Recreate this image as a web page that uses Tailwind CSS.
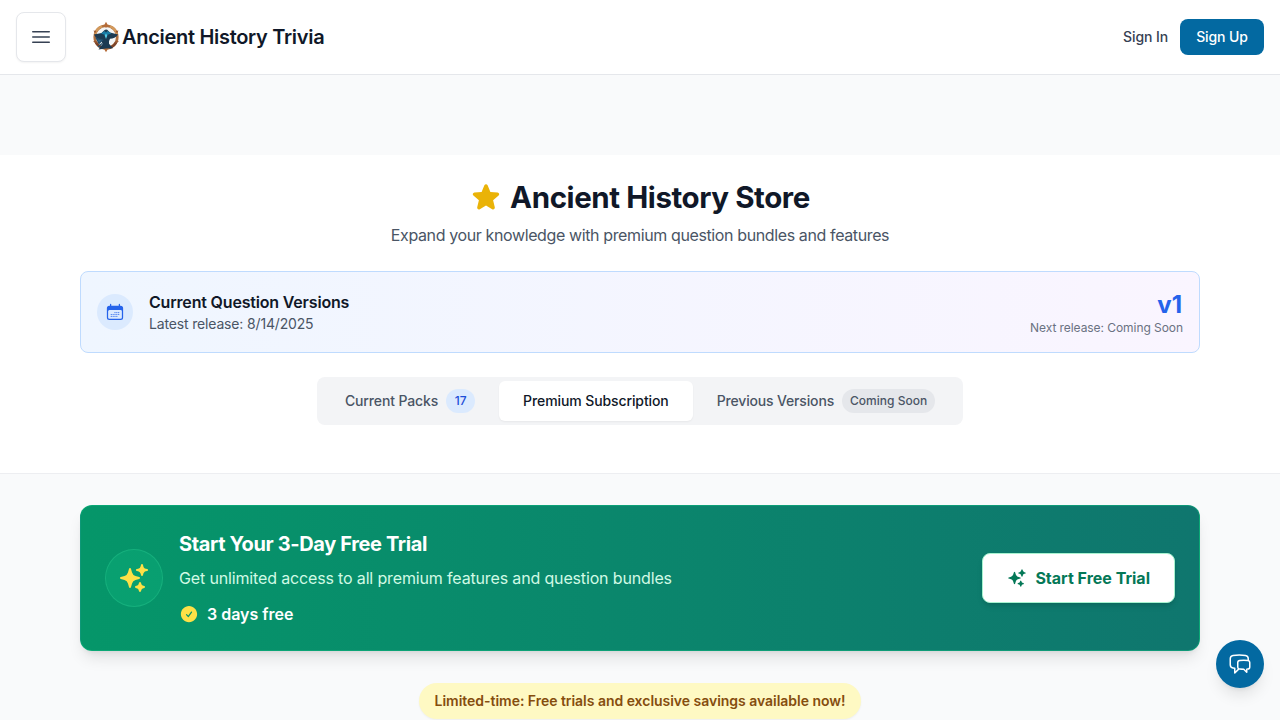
<!DOCTYPE html>
<html lang="en">
<head>
<meta charset="utf-8">
<title>Ancient History Trivia - Store</title>
<script src="https://cdn.jsdelivr.net/npm/@tailwindcss/browser@4"></script>
</head>
<body class="h-screen overflow-hidden bg-gray-50 font-['Inter',sans-serif] text-gray-900">
<svg class="hidden">
  <symbol id="sparkles" viewBox="0 0 24 24"><path fill="currentColor" fill-rule="evenodd" d="M9 4.5a.75.75 0 0 1 .721.544l.813 2.846a3.75 3.75 0 0 0 2.576 2.576l2.846.813a.75.75 0 0 1 0 1.442l-2.846.813a3.75 3.75 0 0 0-2.576 2.576l-.813 2.846a.75.75 0 0 1-1.442 0l-.813-2.846a3.75 3.75 0 0 0-2.576-2.576l-2.846-.813a.75.75 0 0 1 0-1.442l2.846-.813A3.75 3.75 0 0 0 7.466 7.89l.813-2.846A.75.75 0 0 1 9 4.5ZM18 1.5a.75.75 0 0 1 .728.568l.258 1.036c.236.94.97 1.674 1.91 1.91l1.036.258a.75.75 0 0 1 0 1.456l-1.036.258c-.94.236-1.674.97-1.91 1.91l-.258 1.036a.75.75 0 0 1-1.456 0l-.258-1.036a2.625 2.625 0 0 0-1.91-1.91l-1.036-.258a.75.75 0 0 1 0-1.456l1.036-.258a2.625 2.625 0 0 0 1.91-1.91l.258-1.036A.75.75 0 0 1 18 1.5ZM16.5 15a.75.75 0 0 1 .712.513l.394 1.183c.15.447.5.799.948.948l1.183.395a.75.75 0 0 1 0 1.422l-1.183.395c-.447.15-.799.5-.948.948l-.395 1.183a.75.75 0 0 1-1.422 0l-.395-1.183a1.5 1.5 0 0 0-.948-.948l-1.183-.395a.75.75 0 0 1 0-1.422l1.183-.395c.447-.15.799-.5.948-.948l.395-1.183A.75.75 0 0 1 16.5 15Z"/></symbol>
</svg>

<header class="flex h-[75px] items-center border-b border-gray-200 bg-white px-4">
  <button class="flex size-[50px] items-center justify-center rounded-lg border border-gray-200 bg-white text-gray-700 shadow-xs">
    <svg class="size-6" viewBox="0 0 24 24" fill="none" stroke="currentColor" stroke-width="1.5" stroke-linecap="round"><path d="M3.75 6.75h16.5M3.75 12h16.5m-16.5 5.25h16.5"/></svg>
  </button>
  <div class="ml-6 flex items-center">
    <svg class="h-8 w-8" viewBox="0 0 32 32">
      <circle cx="16" cy="16" r="11.3" fill="#f3f5f6" stroke="#b0703f" stroke-width="2.600"/>
      <path d="M5 13a11.500 11.500 0 0 1 7-7.600M20 5.400a11.500 11.500 0 0 1 7 7.600" fill="none" stroke="#d39a5c" stroke-width="2.200"/>
      <path d="M5.600 21a11.500 11.500 0 0 0 7 5.800M26.400 21a11.500 11.500 0 0 1-7 5.800" fill="none" stroke="#7a4229" stroke-width="2.400"/>
      <path d="M16 .8l2 3.600-2 2.600-2-2.600zM16 31.200l2.200-3.800L16 24.500l-2.200 2.900z" fill="#b56a36"/>
      <path d="M3.500 9.500l3 .5-1.500 2.500zM28.500 9.500l-3 .5 1.500 2.500zM3 20.500l3-1 1 3zM29 20.500l-3-1-1 3z" fill="#9a5a34"/>
      <path d="M16 8.500c2 0 2.500 2 4 3l8 2c-1.800 3-5 4-8 4.200l-1 2.500v2.500l4 4.500-7 .3-7.500 1 4-5.500-1-3C8 19.500 6 17 4 13.500l7.500-1.500c1.500-1 2.500-3.500 4.500-3.500z" fill="#1c3a52"/>
      <path d="M11 12.500l3.500-2.500 1.500 1.500 1.500-1.500 4 2.500-4 1.200-1.500 2-1.500-2z" fill="#1a7ca6"/>
      <path d="M16 12.500l1.300 2-1.300 3.500-1.300-3.500z" fill="#52cbe6"/>
      <path d="M6.500 17.500l6 1.500-3.500 3.500zM12 22.500l-4 3.500" fill="#2c6a90" stroke="#234d6b" stroke-width="1.300"/>
    </svg>
    <span class="text-xl leading-7 font-semibold tracking-[-0.3px]">Ancient History Trivia</span>
  </div>
  <nav class="ml-auto flex items-center gap-3 text-sm">
    <a class="font-medium tracking-[-0.1px] text-gray-700">Sign In</a>
    <a class="w-[84px] rounded-lg bg-[#0369a1] py-2 text-center font-medium tracking-[-0.1px] text-white">Sign Up</a>
  </nav>
</header>

<section class="mt-20 border-b border-gray-200/70 bg-white px-20 pt-6 pb-12">
  <h1 class="flex items-center justify-center gap-2 text-[29.500px] leading-9 font-bold tracking-[-0.42px]">
    <svg class="size-8 text-[#eab308]" viewBox="0 0 24 24" fill="currentColor"><path fill-rule="evenodd" d="M10.788 3.21c.448-1.077 1.976-1.077 2.424 0l2.082 5.006 5.404.434c1.164.093 1.636 1.545.749 2.305l-4.117 3.527 1.257 5.273c.271 1.136-.964 2.033-1.96 1.425L12 18.354 7.373 21.18c-.996.608-2.231-.29-1.96-1.425l1.257-5.273-4.117-3.527c-.887-.76-.415-2.212.749-2.305l5.404-.434 2.082-5.005Z"/></svg>
    <span>Ancient History Store</span>
  </h1>
  <p class="mt-2 text-center text-base tracking-[-0.38px] text-gray-600">Expand your knowledge with premium question bundles and features</p>

  <div class="mt-6 flex items-center justify-between rounded-lg border border-[#bfdbfe] bg-linear-to-r from-[#eff6ff] to-[#faf5ff] p-4">
    <div class="flex items-center gap-4">
      <div class="rounded-full bg-[#dbeafe] p-2 text-[#2563eb]">
        <svg class="size-5" viewBox="0 0 24 24" fill="none" stroke="currentColor" stroke-width="1.5" stroke-linecap="round" stroke-linejoin="round"><path fill="currentColor" stroke="none" d="M3 11.200V7.500a2.250 2.250 0 0 1 2.250-2.250h13.500A2.250 2.250 0 0 1 21 7.500v3.700A2.250 2.250 0 0 0 18.750 9H5.250A2.250 2.250 0 0 0 3 11.200z"/><path d="M6.75 2.994v2.25m10.5-2.25v2.25m-14.252 13.5V7.491a2.25 2.25 0 0 1 2.25-2.25h13.5a2.25 2.25 0 0 1 2.25 2.25v11.251m-18 0a2.25 2.25 0 0 0 2.25 2.25h13.5a2.25 2.25 0 0 0 2.25-2.25m-18 0v-7.5a2.25 2.25 0 0 1 2.25-2.25h13.5a2.25 2.25 0 0 1 2.25 2.25v7.5"/><path stroke-width="1.400" d="M12 12.740h.01m2.240 0h.01m2.240 0h.01M7.500 15h.01m2.240 0h.01m2.240 0h.01m2.240 0h.01m2.240 0h.01M7.500 17.240h.01m2.240 0h.01m2.240 0h.01m2.240 0h.01"/></svg>
      </div>
      <div>
        <h3 class="text-base font-semibold tracking-[-0.18px]">Current Question Versions</h3>
        <p class="text-sm tracking-[-0.16px] text-gray-600">Latest release: 8/14/2025</p>
      </div>
    </div>
    <div class="text-right">
      <div class="translate-y-px text-2xl font-bold text-[#2563eb]"><span class="mr-px">v1</span></div>
      <div class="text-xs tracking-[-0.06px] text-gray-500">Next release: Coming Soon</div>
    </div>
  </div>

  <div class="mt-6 flex justify-center">
    <div class="flex rounded-lg bg-gray-100 p-1 text-sm font-medium text-gray-600">
      <button class="flex items-center gap-2 px-6 py-2 tracking-[-0.13px]">Current Packs<span class="w-[29px] rounded-full bg-[#dbeafe] py-1 text-center text-xs tracking-normal text-[#1d4ed8]">17</span></button>
      <button class="rounded-md bg-white px-6 py-2 tracking-[-0.1px] text-gray-900 shadow-xs">Premium Subscription</button>
      <button class="flex items-center gap-2 px-6 py-2 tracking-[-0.16px]">Previous Versions<span class="rounded-full bg-gray-200 px-2 py-1 text-xs tracking-normal">Coming Soon</span></button>
    </div>
  </div>
</section>

<main class="px-20 pt-[31px]">
  <div class="flex items-center justify-between rounded-xl border border-[#10b981]/50 bg-linear-to-r from-[#059669] to-[#0f766e] p-6 text-white shadow-lg">
    <div class="flex items-center gap-4">
      <div class="rounded-full border border-[#34d399]/30 bg-[#10b981]/30 p-3 text-[#fde047]"><svg class="size-8"><use href="#sparkles"/></svg></div>
      <div>
        <h2 class="text-xl leading-7 font-bold tracking-[-0.37px]">Start Your 3-Day Free Trial</h2>
        <p class="mt-2 text-base tracking-[-0.15px] text-[#d1fae5]">Get unlimited access to all premium features and question bundles</p>
        <div class="mt-3 flex items-center gap-2 font-semibold">
          <svg class="size-5 text-[#fde047]" viewBox="0 0 24 24" fill="currentColor"><path fill-rule="evenodd" d="M2.25 12c0-5.385 4.365-9.75 9.75-9.75s9.750 4.365 9.750 9.750-4.365 9.750-9.750 9.750S2.250 17.385 2.250 12Zm13.360-1.814a.75.75 0 1 0-1.220-.872l-3.236 4.530L9.530 12.220a.75.75 0 0 0-1.060 1.060l2.250 2.250a.75.75 0 0 0 1.140-.094l3.750-5.250Z"/></svg>
          3 days free
        </div>
      </div>
    </div>
    <button class="flex items-center gap-2 rounded-lg border border-[#a7f3d0] bg-white px-6 py-3 text-base font-bold text-[#047857] shadow-md"><svg class="size-5"><use href="#sparkles"/></svg>Start Free Trial</button>
  </div>
  <div class="mt-8 flex justify-center">
    <div class="rounded-full bg-[#fef9c3] px-4 py-2 text-sm font-semibold tracking-[-0.03px] text-[#854d0e] shadow-xs">Limited-time: Free trials and exclusive savings available now!</div>
  </div>
</main>

<button class="fixed right-4 bottom-8 flex size-12 items-center justify-center rounded-full bg-[#0369a1] text-white shadow-lg">
  <svg class="size-6" viewBox="0 0 24 24" fill="none" stroke="currentColor" stroke-width="1.5" stroke-linecap="round" stroke-linejoin="round"><path d="M20.25 8.511c.884.284 1.5 1.128 1.5 2.097v4.286c0 1.136-.847 2.1-1.98 2.193-.34.027-.68.052-1.02.072v3.091l-3-3c-1.354 0-2.694-.055-4.02-.163a2.115 2.115 0 0 1-.825-.242m9.345-8.334a2.126 2.126 0 0 0-.476-.095 48.64 48.64 0 0 0-8.048 0c-1.131.094-1.976 1.057-1.976 2.192v4.286c0 .837.46 1.58 1.155 1.951m9.345-8.334V6.637c0-1.621-1.152-3.026-2.76-3.235A48.455 48.455 0 0 0 11.25 3c-2.115 0-4.198.137-6.24.402-1.608.209-2.76 1.614-2.76 3.235v6.226c0 1.621 1.152 3.026 2.76 3.235.577.075 1.157.14 1.74.194V21l4.155-4.155"/></svg>
</button>
</body>
</html>
